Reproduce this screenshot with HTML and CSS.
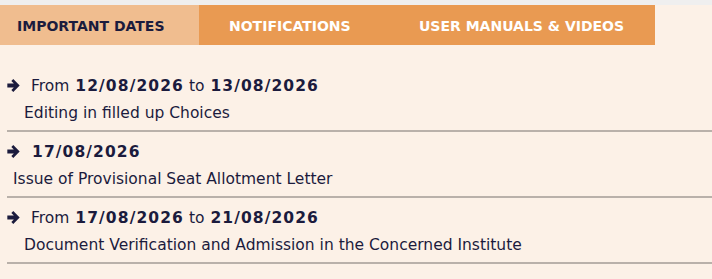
FILE: index.html
```html
<!DOCTYPE html>
<html>
<head>
<meta charset="utf-8">
<link rel="stylesheet" href="styles.css">
</head>
<body>
<div class="strip"></div>
<nav class="tabs">
  <a class="tab tab-active">IMPORTANT DATES</a>
  <a class="tab tab-notif">NOTIFICATIONS</a>
  <a class="tab tab-manual">USER MANUALS &amp; VIDEOS</a>
</nav>
<ul class="dates">
  <li class="item">
    <div class="when"><svg class="arrow" viewBox="0 0 12 12"><path d="M0.3 4.2h6L4 1.9 5.8 0.1 11.7 6 5.8 11.9 4 10.1l2.3-2.3h-6z"/></svg>From <b>12/08/2026</b> to <b>13/08/2026</b></div>
    <div class="what">Editing in filled up Choices</div>
  </li>
  <li class="item">
    <div class="when"><svg class="arrow" viewBox="0 0 12 12"><path d="M0.3 4.2h6L4 1.9 5.8 0.1 11.7 6 5.8 11.9 4 10.1l2.3-2.3h-6z"/></svg><b>17/08/2026</b></div>
    <div class="what what-flush">Issue of Provisional Seat Allotment Letter</div>
  </li>
  <li class="item">
    <div class="when"><svg class="arrow" viewBox="0 0 12 12"><path d="M0.3 4.2h6L4 1.9 5.8 0.1 11.7 6 5.8 11.9 4 10.1l2.3-2.3h-6z"/></svg>From <b>17/08/2026</b> to <b>21/08/2026</b></div>
    <div class="what">Document Verification and Admission in the Concerned Institute</div>
  </li>
</ul>
</body>
</html>
```
FILE: styles.css
```css
html, body {
  margin: 0;
  padding: 0;
}
body {
  background: #fcf1e7;
  font-family: "DejaVu Sans", Verdana, sans-serif;
  color: #1b1b3d;
}
.strip {
  height: 5px;
  background: #efefef;
}
.tabs {
  display: flex;
  height: 40px;
}
.tab {
  display: flex;
  align-items: center;
  box-sizing: border-box;
  padding-top: 1px;
  font-size: 14px;
  font-weight: bold;
  color: #ffffff;
  background: #e99a52;
  padding-left: 30px;
  white-space: nowrap;
}
.tab-active {
  width: 199px;
  padding-left: 17px;
  background: #f0bd8f;
  color: #1b1b3d;
}
.tab-notif {
  width: 190px;
}
.tab-manual {
  width: 266px;
}
.dates {
  list-style: none;
  margin: 0;
  padding: 21px 0 0 7px;
}
.item {
  padding: 7px 0 3px;
  border-bottom: 2px solid #b9b1aa;
}
.when {
  height: 27px;
  line-height: 27px;
  font-size: 15.5px;
  white-space: nowrap;
}
.when b {
  letter-spacing: 1.1px;
  margin-left: 1px;
}
.arrow {
  width: 13px;
  height: 13px;
  fill: #1b1b3d;
  margin-right: 11px;
  vertical-align: -1px;
}
.what {
  height: 27px;
  line-height: 27px;
  font-size: 15.5px;
  padding-left: 17px;
}
.what-flush {
  padding-left: 6px;
}
```
